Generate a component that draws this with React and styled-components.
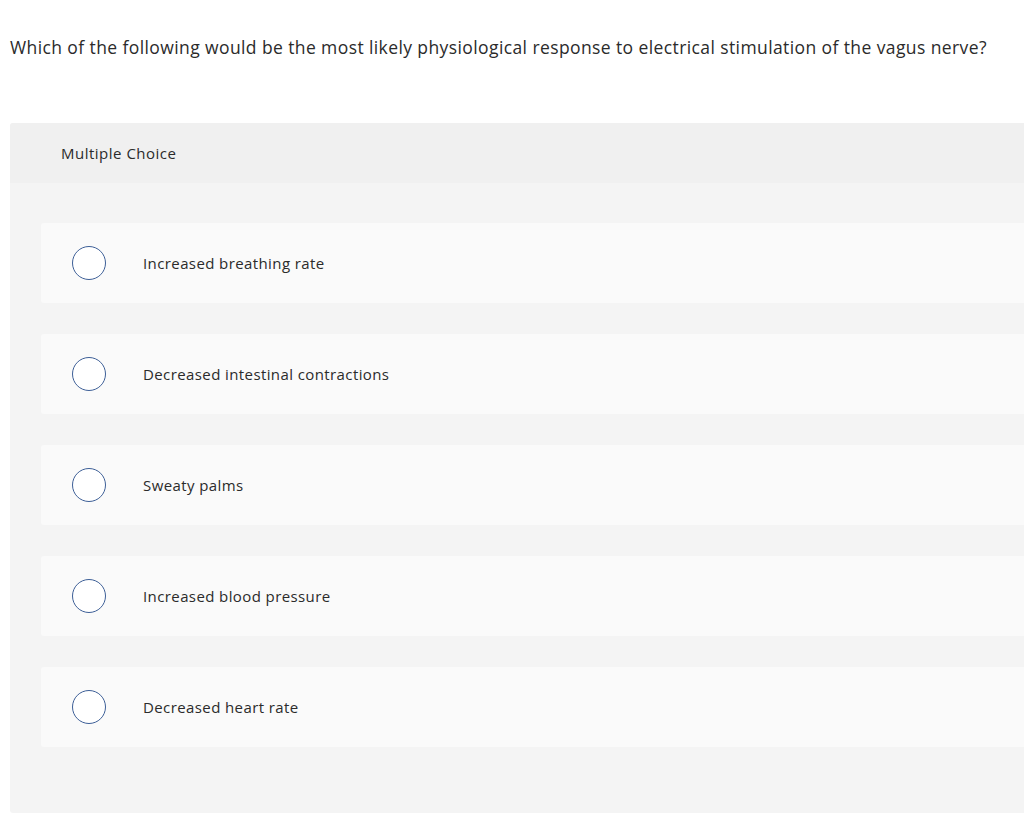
import React from "react";
import styled, { createGlobalStyle } from "styled-components";

const Global = createGlobalStyle`
  html, body { margin: 0; padding: 0; background: #fff; overflow: hidden; }
  body { font-family: "Open Sans", "Liberation Sans", sans-serif; color: #2b2b2b; }
`;

const Page = styled.div`
  width: 1024px;
  height: 814px;
  overflow: hidden;
  padding: 0 0 0 10px;
  box-sizing: border-box;
`;

const Question = styled.p`
  margin: 0;
  padding-top: 36px;
  height: 123px;
  box-sizing: border-box;
  font-size: 17.5px;
  letter-spacing: 0.4px;
  line-height: 22px;
  color: #2b2b2b;
  white-space: nowrap;
`;

const Card = styled.section`
  width: 1040px;
  background: #f4f4f4;
  border-radius: 3px;
  padding-bottom: 66px;
`;

const Header = styled.div`
  height: 60px;
  display: flex;
  align-items: center;
  padding-left: 51px;
  background: #f0f0f0;
  border-radius: 3px 3px 0 0;
  font-size: 15px;
  letter-spacing: 0.5px;
  color: #2b2b2b;
`;

const List = styled.div`
  display: flex;
  flex-direction: column;
  gap: 31px;
  padding: 40px 0 0 31px;
`;

const Option = styled.label`
  height: 80px;
  display: flex;
  align-items: center;
  background: #fafafa;
  border-radius: 3px;
  padding-left: 31px;
  cursor: pointer;
`;

const Radio = styled.span`
  width: 34px;
  height: 34px;
  box-sizing: border-box;
  border: 1.5px solid #3d5f97;
  border-radius: 50%;
  background: #fff;
  flex: none;
  margin-right: 37px;
`;

const OptionText = styled.span`
  font-size: 15px;
  letter-spacing: 0.4px;
  color: #2b2b2b;
`;

const options = [
  "Increased breathing rate",
  "Decreased intestinal contractions",
  "Sweaty palms",
  "Increased blood pressure",
  "Decreased heart rate",
];

export default function App() {
  return (
    <>
      <Global />
      <Page>
        <Question>
          Which of the following would be the most likely physiological response to electrical stimulation of the vagus nerve?
        </Question>
        <Card>
          <Header>Multiple Choice</Header>
          <List>
            {options.map((o) => (
              <Option key={o}>
                <Radio />
                <OptionText>{o}</OptionText>
              </Option>
            ))}
          </List>
        </Card>
      </Page>
    </>
  );
}
